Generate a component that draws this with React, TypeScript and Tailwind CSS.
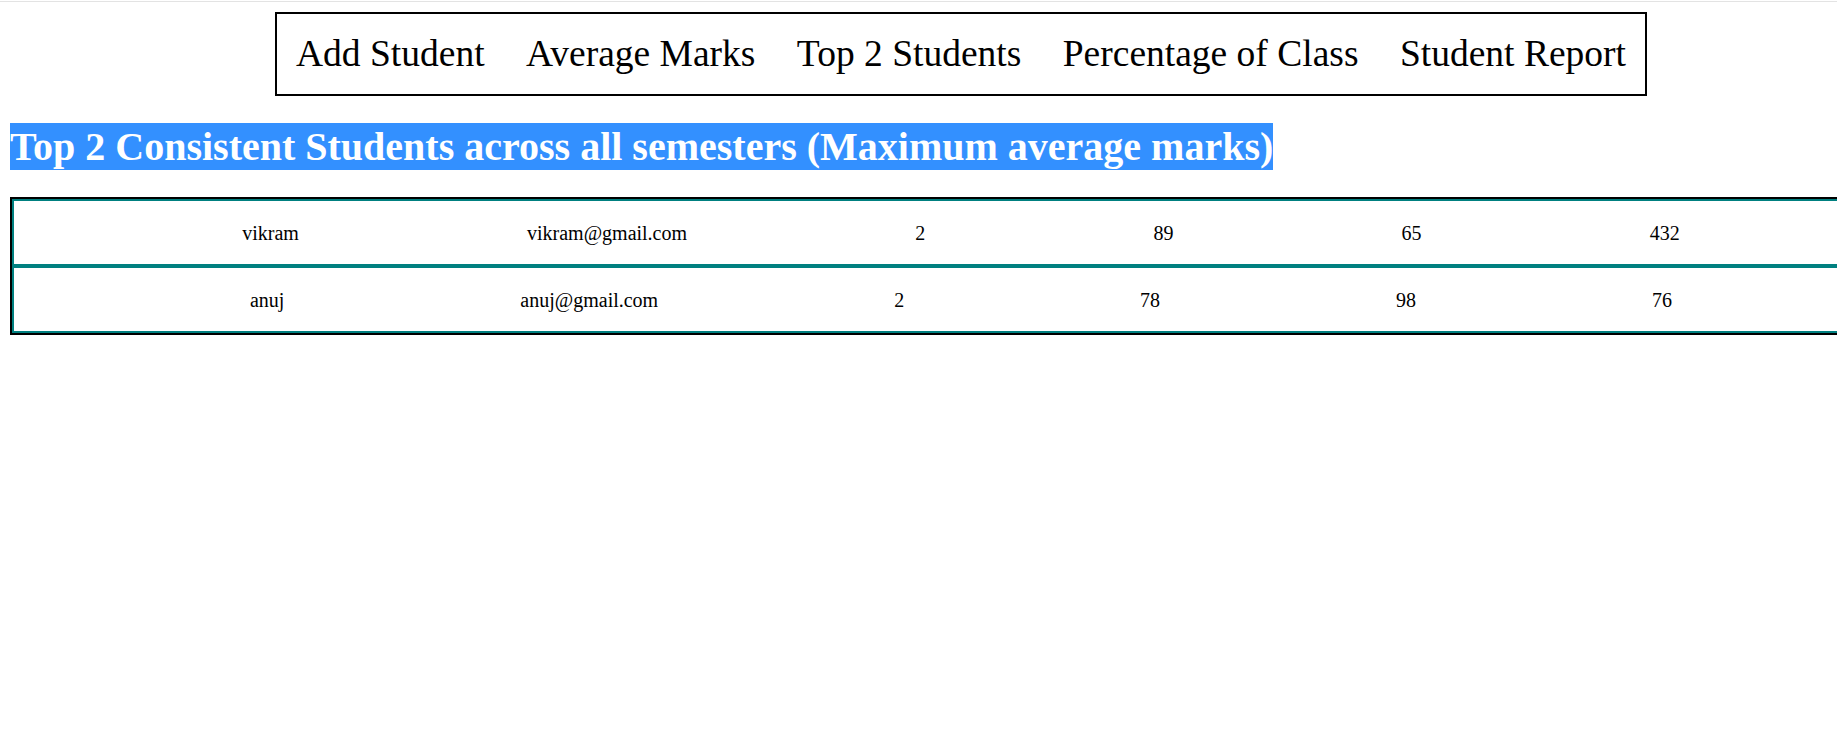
import React from 'react';

const links = ['Add Student', 'Average Marks', 'Top 2 Students', 'Percentage of Class', 'Student Report'];

const students = [
  { name: 'vikram', email: 'vikram@gmail.com', sem: 2, m1: 89, m2: 65, m3: 432 },
  { name: 'anuj', email: 'anuj@gmail.com', sem: 2, m1: 78, m2: 98, m3: 76 },
];

export default function App() {
  return (
    <div className="w-full min-h-screen overflow-hidden bg-white text-black" style={{ fontFamily: '"Liberation Serif", "Times New Roman", serif' }}>
      <div className="mt-px h-px w-full bg-[#e3e3e3]" />
      <div className="ml-[10px] w-[1902px]">
        <nav className="mx-auto mt-[10px] flex h-[84px] w-[1372px] items-center justify-between border-2 border-black px-[19px] text-[37.5px] leading-none">
          {links.map(l => (
            <a key={l} href="#" className="whitespace-nowrap">{l}</a>
          ))}
        </nav>

        <h1 className="mt-[27px] text-[40px] font-bold leading-[47px]">
          <span className="inline-block h-[47px] bg-[#3390ff] leading-[47px] text-white">
            Top 2 Consistent Students across all semesters (Maximum average marks)
          </span>
        </h1>

        <div className="mt-[27px] border-2 border-black text-[20px]">
          {students.map(s => (
            <div key={s.email} className="flex h-[67px] items-center justify-evenly border-2 border-[#008080]">
              <span>{s.name}</span>
              <span>{s.email}</span>
              <span>{s.sem}</span>
              <span>{s.m1}</span>
              <span>{s.m2}</span>
              <span>{s.m3}</span>
            </div>
          ))}
        </div>
      </div>
    </div>
  );
}
